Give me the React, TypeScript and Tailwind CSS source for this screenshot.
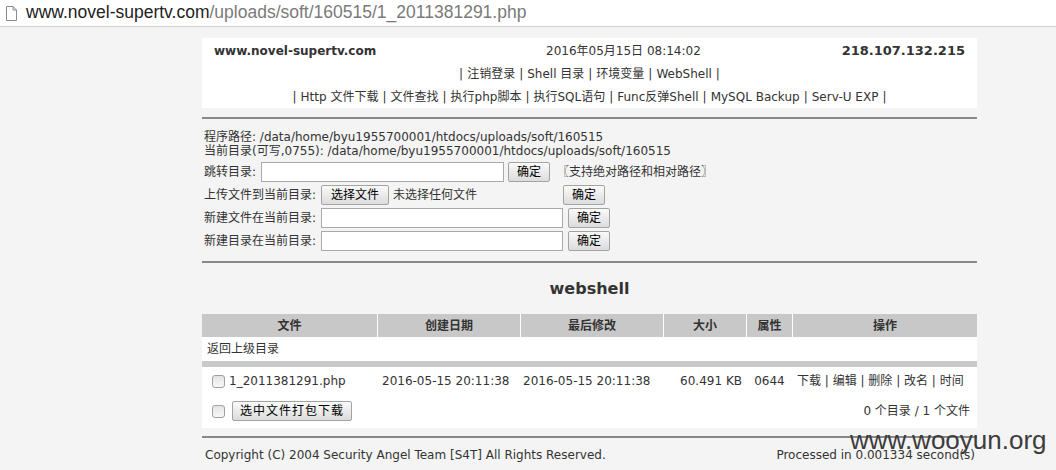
import { ReactNode } from "react";
import clsx from "clsx";

function Btn({ children, className }: { children: ReactNode; className?: string }) {
  return (
    <button
      className={clsx(
        "h-[20px] border border-[#a3a3a3] rounded-[2px] bg-linear-to-b from-[#fafafa] to-[#dcdcdc] text-[12px] text-black leading-none flex items-center justify-center",
        className
      )}
    >
      {children}
    </button>
  );
}

function Box({ className }: { className?: string }) {
  return (
    <input
      type="checkbox"
      className={clsx(
        "appearance-none w-[13px] h-[13px] border border-[#a0a0a0] rounded-[3px] bg-linear-to-b from-[#e4e4e4] to-[#f8f8f8] shrink-0",
        className
      )}
    />
  );
}

function Field({ className }: { className?: string }) {
  return <input className={clsx("h-[20px] bg-white border border-[#a9a9a9] outline-none", className)} />;
}

const sep = <span className="px-[4px]">|</span>;

export default function App() {
  return (
    <div className="min-h-screen w-[1056px] h-[470px] overflow-hidden bg-[#f4f4f4] text-[#333] text-[12px] leading-[14px] font-['DejaVu_Sans','Noto_Sans_CJK_SC',sans-serif] relative">
      {/* address bar */}
      <div className="h-[27px] bg-white border-b border-[#cfcfcf] flex items-center pl-[6px] font-['Liberation_Sans','Noto_Sans_CJK_SC',sans-serif] text-[17.5px] leading-none">
        <svg width="11" height="15" viewBox="0 0 11 15" className="mr-[9px]">
          <path d="M0.5 0.5 H7 L10.5 4 V14.5 H0.5 Z" fill="#fff" stroke="#8a8a8a" />
          <path d="M7 0.5 V4 H10.5" fill="none" stroke="#8a8a8a" />
        </svg>
        <span className="text-[#222]">www.novel-supertv.com</span>
        <span className="text-[#7a7a7a]">/uploads/soft/160515/1_2011381291.php</span>
      </div>

      <div className="ml-[202px] w-[775px]">
        {/* header */}
        <div className="mt-[11px] bg-white h-[70px] flex flex-col">
          <div className="h-[24px] flex items-center px-[12px] pt-[1px]">
            <span className="w-[332px] font-bold">www.novel-supertv.com</span>
            <span>2016年05月15日 08:14:02</span>
            <span className="ml-auto font-bold text-[13px]">218.107.132.215</span>
          </div>
          <div className="h-[23px] flex items-center justify-center">
            <span>|</span>
            <span className="pl-[4px]">注销登录</span>
            {sep}
            <span>Shell 目录</span>
            {sep}
            <span>环境变量</span>
            {sep}
            <span>WebShell</span>
            <span className="pl-[4px]">|</span>
          </div>
          <div className="h-[23px] flex items-center justify-center">
            <span>|</span>
            <span className="pl-[4px]">Http 文件下载</span>
            {sep}
            <span>文件查找</span>
            {sep}
            <span>执行php脚本</span>
            {sep}
            <span>执行SQL语句</span>
            {sep}
            <span>Func反弹Shell</span>
            {sep}
            <span>MySQL Backup</span>
            {sep}
            <span>Serv-U EXP</span>
            <span className="pl-[4px]">|</span>
          </div>
        </div>

        <div className="mt-[9px] h-[2px] bg-[#888]" />

        {/* paths & forms */}
        <div className="pt-[11px] pl-[2px]">
          <div>程序路径: /data/home/byu1955700001/htdocs/uploads/soft/160515</div>
          <div>当前目录(可写,0755): /data/home/byu1955700001/htdocs/uploads/soft/160515</div>
          <div className="h-[23px] flex items-center mt-[2px]">
            <span className="w-[57px]">跳转目录:</span>
            <Field className="w-[243px]" />
            <Btn className="w-[42px] ml-[4px]">确定</Btn>
            <span className="ml-[7px]">〖支持绝对路径和相对路径〗</span>
          </div>
          <div className="h-[23px] flex items-center">
            <span className="w-[117px]">上传文件到当前目录:</span>
            <Btn className="w-[68px]">选择文件</Btn>
            <span className="ml-[4px] w-[170px]">未选择任何文件</span>
            <Btn className="w-[42px]">确定</Btn>
          </div>
          <div className="h-[23px] flex items-center">
            <span className="w-[117px]">新建文件在当前目录:</span>
            <Field className="w-[242px]" />
            <Btn className="w-[42px] ml-[5px]">确定</Btn>
          </div>
          <div className="h-[23px] flex items-center">
            <span className="w-[117px]">新建目录在当前目录:</span>
            <Field className="w-[242px]" />
            <Btn className="w-[42px] ml-[5px]">确定</Btn>
          </div>
        </div>

        <div className="mt-[9px] h-[2px] bg-[#888]" />

        <div className="h-[51px] flex items-center justify-center text-[16px] font-bold text-[#333]">webshell</div>

        {/* file table */}
        <div className="bg-white">
          <div className="grid grid-cols-[175px_142px_142px_82px_45px_184px] gap-x-px font-bold">
            {["文件", "创建日期", "最后修改", "大小", "属性", "操作"].map((h) => (
              <div key={h} className="h-[23px] bg-[#c8c8c8] flex items-center justify-center">
                {h}
              </div>
            ))}
          </div>
          <div className="h-[24px] flex items-center pl-[5px]">返回上级目录</div>
          <div className="h-[6px] bg-[#cacaca]" />
          <div className="h-[28px] grid grid-cols-[175px_142px_142px_82px_45px_184px] gap-x-px items-center">
            <div className="flex items-center pl-[10px]">
              <Box />
              <span className="ml-[4px]">1_2011381291.php</span>
            </div>
            <div className="pl-[4px]">2016-05-15 20:11:38</div>
            <div className="pl-[2px]">2016-05-15 20:11:38</div>
            <div className="text-right pr-[4px]">60.491 KB</div>
            <div className="text-center">0644</div>
            <div className="pl-[4px]">
              下载 | 编辑 | 删除 | 改名 | 时间
            </div>
          </div>
          <div className="h-[33px] flex items-center pl-[10px] pr-[7px] pb-[1px]">
            <Box />
            <Btn className="w-[120px] ml-[7px] tracking-[1px]">选中文件打包下载</Btn>
            <span className="ml-auto">0 个目录 / 1 个文件</span>
          </div>
        </div>

        <div className="mt-[8px] h-[2px] bg-[#888]" />

        <div className="h-[34px] flex items-center pl-[3px] pr-[2px]">
          <span>Copyright (C) 2004 Security Angel Team [S4T] All Rights Reserved.</span>
          <span className="ml-auto">Processed in 0.001334 second(s)</span>
        </div>
      </div>

      {/* watermark */}
      <div className="absolute left-[850px] top-[424px] text-[26px] leading-[32px] text-[#3c3c3c] font-['Liberation_Sans',sans-serif]">
        www.wooyun.org
      </div>
    </div>
  );
}
